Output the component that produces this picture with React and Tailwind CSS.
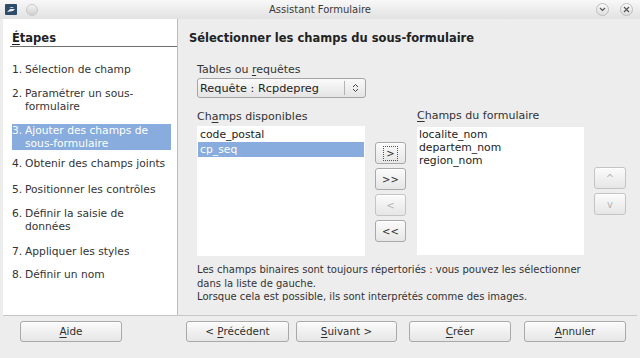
import React from "react";

const U = ({ children }) => <span className="underline underline-offset-2">{children}</span>;

function Btn({ children, className = "", disabled = false, focus = false }) {
  return (
    <div
      className={
        "flex items-center justify-center rounded-[3px] border bg-gradient-to-b from-[#fbfbfb] to-[#e6e6e6] shadow-[inset_0_1px_0_#ffffff] " +
        (disabled ? "text-[#b5b5b5] border-[#c4c4c4] " : "text-[#2e2e2e] border-[#a9a9a9] ") +
        className
      }
    >
      {focus ? (
        <span className="border border-dotted border-[#555] px-[2px] leading-[13px]">{children}</span>
      ) : (
        children
      )}
    </div>
  );
}

const steps = [
  ["1.", ["Sélection de champ"], false, 0],
  ["2.", ["Paramétrer un sous-", "formulaire"], false, 11],
  ["3.", ["Ajouter des champs de", "sous-formulaire"], true, 11],
  ["4.", ["Obtenir des champs joints"], false, 7],
  ["5.", ["Positionner les contrôles"], false, 13],
  ["6.", ["Définir la saisie de", "données"], false, 11],
  ["7.", ["Appliquer les styles"], false, 12],
  ["8.", ["Définir un nom"], false, 10],
];

export default function App() {
  return (
    <div
      className="w-[640px] h-[358px] overflow-hidden flex flex-col bg-[#e9e9e9] text-[#333] text-[10px] leading-[13px]"
      style={{ fontFamily: '"DejaVu Sans", Verdana, sans-serif' }}
    >
      {/* Title bar */}
      <div className="h-[19px] shrink-0 flex items-center px-[5px] bg-gradient-to-b from-[#f8f8f8] to-[#e2e2e2] relative">
        <div className="w-[12px] h-[11px] bg-[#2d4c6a] rounded-[1px] flex items-center justify-center">
          <svg width="10" height="8" viewBox="0 0 10 8">
            <path d="M1 6 L4 3 L9 3 L7 5 Z" fill="#e8eef4" />
            <path d="M3 2 L6 1 L8 1 L6 2 Z" fill="#e8eef4" />
          </svg>
        </div>
        <div className="ml-[9px] w-[12px] h-[12px] rounded-full bg-gradient-to-b from-[#f4f4f4] to-[#cfcfcf] border border-[#c8c8c8]" />
        <div className="absolute left-0 right-0 top-0 h-[19px] flex items-center justify-center text-[#3a3a3a] pointer-events-none">
          Assistant Formulaire
        </div>
        <div className="ml-auto flex items-center gap-[11px] pr-[2px]">
          <div className="w-[13px] h-[13px] rounded-full border border-[#bdbdbd] bg-gradient-to-b from-[#fafafa] to-[#dedede] flex items-center justify-center">
            <svg width="7" height="5" viewBox="0 0 7 5"><path d="M1 1 L3.5 3.5 L6 1" stroke="#555" strokeWidth="1.2" fill="none" /></svg>
          </div>
          <div className="w-[13px] h-[13px] rounded-full border border-[#bdbdbd] bg-gradient-to-b from-[#fafafa] to-[#dedede] flex items-center justify-center">
            <svg width="7" height="7" viewBox="0 0 7 7"><path d="M1 1 L6 6 M6 1 L1 6" stroke="#555" strokeWidth="1.2" fill="none" /></svg>
          </div>
        </div>
      </div>

      {/* Body */}
      <div className="flex-1 flex flex-col px-[3px] bg-[#ededed]">
        <div className="h-[297px] flex border-b border-[#c6c6c6]">
          {/* Left panel */}
          <div className="w-[175px] shrink-0 bg-white border-r border-[#bdbdbd] flex flex-col">
            <div className="mt-[12px] ml-[7px] pl-[2px] pb-[1px] border-b border-[#6f6f6f] font-bold text-[#222] text-[11.5px] leading-[14px]">
              <span className="underline underline-offset-2">É</span>tapes
            </div>
            <div className="mt-[16px] flex flex-col pl-[9px] pr-[6px] text-[10.7px]">
              {steps.map(([n, lines, sel, mt]) => (
                <div
                  key={n}
                  style={{ marginTop: mt }}
                  className={"flex " + (sel ? "bg-[#87acdd] text-white" : "text-[#333]")}
                >
                  <span className="w-[13px] shrink-0">{n}</span>
                  <div className="flex flex-col">
                    {lines.map((l) => (
                      <span key={l}>{l}</span>
                    ))}
                  </div>
                </div>
              ))}
            </div>
          </div>

          {/* Right panel */}
          <div className="flex-1 flex flex-col pl-[11px]">
            <div className="mt-[12px] font-bold text-[#222] text-[11.5px] leading-[14px]">
              Sélectionner les champs du sous-formulaire
            </div>
            <div className="ml-[8px] flex flex-col">
              <div className="mt-[18px] text-[11px]">
                Tables ou <U>r</U>equêtes
              </div>
              <div className="mt-[2px] w-[169px] h-[20px] rounded-[3px] border border-[#a5a5a5] bg-gradient-to-b from-[#fafafa] to-[#e4e4e4] flex items-center">
                <span className="pl-[2px] flex-1 text-[#222] text-[11.3px]">Requête : Rcpdepreg</span>
                <div className="w-px h-[14px] bg-[#b3b3b3]" />
                <div className="w-[20px] flex items-center justify-center">
                  <svg width="7" height="10" viewBox="0 0 7 10">
                    <path d="M1 4 L3.5 1.5 L6 4 M1 6 L3.5 8.5 L6 6" stroke="#444" strokeWidth="1" fill="none" />
                  </svg>
                </div>
              </div>

              <div className="mt-[12px] flex">
                {/* Left list */}
                <div className="flex flex-col w-[168px]">
                  <div className="text-[11px]">
                    Ch<U>a</U>mps disponibles
                  </div>
                  <div className="mt-[3px] h-[130px] bg-white flex flex-col pt-[1px] px-[1px] text-[#222] leading-[15px] text-[10.8px]">
                    <span className="pl-[2px]">code_postal</span>
                    <span className="pl-[2px] bg-[#87acdd] text-white">cp_seq</span>
                  </div>
                </div>
                {/* Move buttons */}
                <div className="ml-[10px] w-[31px] pt-[32px] flex flex-col gap-[4px]">
                  <Btn className="h-[22px]" focus>&gt;</Btn>
                  <Btn className="h-[22px]">&gt;&gt;</Btn>
                  <Btn className="h-[22px]" disabled>&lt;</Btn>
                  <Btn className="h-[22px]">&lt;&lt;</Btn>
                </div>
                {/* Right list */}
                <div className="ml-[11px] flex flex-col w-[167px]">
                  <div className="-mt-[1px] text-[11px]">
                    <U>C</U>hamps du formulaire
                  </div>
                  <div className="mt-[5px] h-[128px] bg-white flex flex-col pt-[1px] pl-[2px] text-[#222] text-[10.8px]">
                    <span>localite_nom</span>
                    <span>departem_nom</span>
                    <span>region_nom</span>
                  </div>
                </div>
                <div className="ml-[10px] w-[32px] pt-[57px] flex flex-col gap-[4px]">
                  <Btn className="h-[22px]" disabled>^</Btn>
                  <Btn className="h-[22px]" disabled>v</Btn>
                </div>
              </div>

              <div className="mt-[7px] leading-[13.5px] text-[#333]">
                <div>Les champs binaires sont toujours répertoriés : vous pouvez les sélectionner</div>
                <div>dans la liste de gauche.</div>
                <div>Lorsque cela est possible, ils sont interprétés comme des images.</div>
              </div>
            </div>
          </div>
        </div>

        {/* Bottom buttons */}
        <div className="flex items-start pt-[5px] text-[10.4px]">
          <Btn className="ml-[17px] w-[102px] h-[21px]">
            <span><U>A</U>ide</span>
          </Btn>
          <Btn className="ml-[64px] w-[103px] h-[21px]">
            <span>&lt; <U>P</U>récédent</span>
          </Btn>
          <Btn className="ml-[7px] w-[101px] h-[21px]">
            <span><U>S</U>uivant &gt;</span>
          </Btn>
          <Btn className="ml-[12px] w-[102px] h-[21px]">
            <span><U>C</U>réer</span>
          </Btn>
          <Btn className="ml-[13px] w-[102px] h-[21px]">
            <span><U>A</U>nnuler</span>
          </Btn>
        </div>
      </div>
    </div>
  );
}
